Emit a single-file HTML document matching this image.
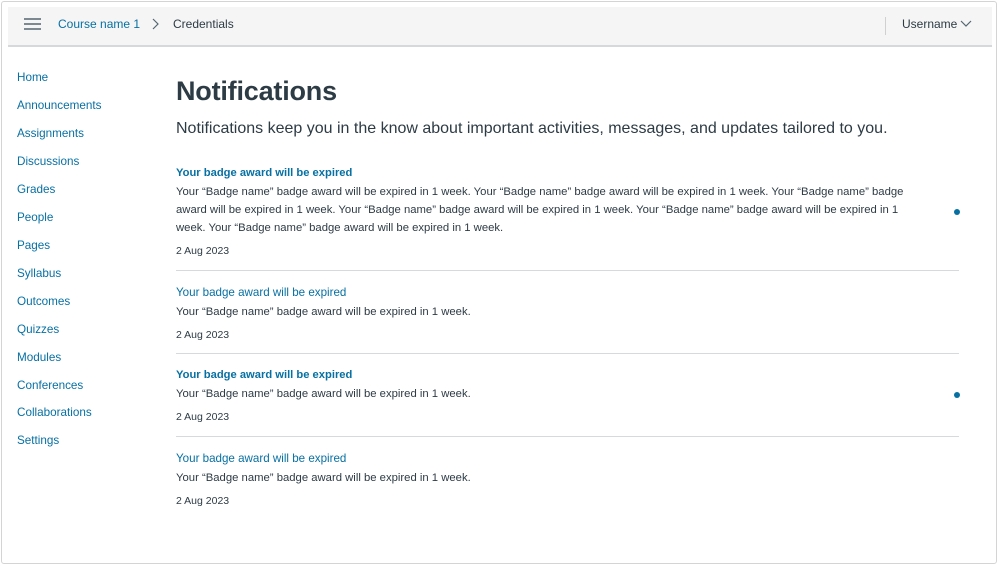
<!DOCTYPE html>
<html><head><meta charset="utf-8"><style>
*{margin:0;padding:0;box-sizing:border-box}
body{width:999px;height:566px;background:#fff;font-family:"Liberation Sans",sans-serif;position:relative;overflow:hidden;color:#2d3b45}
.frame{position:absolute;left:1px;top:1px;width:996px;height:563px;border:1px solid #d4d4d4;border-radius:3px}
.hdr{position:absolute;left:8px;top:7px;width:984px;height:40px;background:#f5f5f5;border-bottom:2px solid #d6d9db}
.hdr .t{position:absolute;top:10px;font-size:12px}
.nav a{position:absolute;left:17px;font-size:11.7px;color:#0770a3;text-decoration:none}
h1{position:absolute;left:176px;top:76px;font-size:27px;font-weight:bold;color:#2d3b45;letter-spacing:-0.2px}
.intro{position:absolute;left:176px;top:120px;font-size:16px;color:#2d3b45}
.it{position:absolute;left:176px;width:783px}
.ti{font-size:11.6px;color:#0770a3}
.b{font-weight:bold;font-size:11.2px}
.p{font-size:11.3px;line-height:18px;color:#2d3b45;margin-top:4px}
.d{font-size:10.5px;color:#2d3b45;margin-top:8px}
.hr{position:absolute;left:176px;width:783px;height:1px;background:#d7dadc}
.dot{position:absolute;left:954px;width:6px;height:6px;border-radius:50%;background:#0770a3}
</style></head><body>
<div class="frame"></div>
<div class="hdr">
<svg style="position:absolute;left:15px;top:10px" width="20" height="14"><path d="M1 2H18M1 7H18M1 12H18" stroke="#556572" stroke-width="1.6"/></svg>
<span class="t" style="left:50px;color:#0770a3">Course name 1</span>
<svg style="position:absolute;left:144px;top:11px" width="8" height="12"><path d="M1 1L6 6L1 11" stroke="#556572" stroke-width="1.2" fill="none"/></svg>
<span class="t" style="left:165px;color:#2d3b45">Credentials</span>
<div style="position:absolute;left:877px;top:10px;width:1px;height:18px;background:#d0d0d0"></div>
<span class="t" style="left:894px;color:#2d3b45">Username</span>
<svg style="position:absolute;left:952px;top:13px" width="12" height="8"><path d="M1 1L6 6L11 1" stroke="#556572" stroke-width="1.2" fill="none"/></svg>
</div>
<div class="nav">
<a style="top:71px">Home</a><a style="top:99px">Announcements</a><a style="top:127px">Assignments</a><a style="top:155px">Discussions</a><a style="top:183px">Grades</a><a style="top:211px">People</a><a style="top:239px">Pages</a><a style="top:267px">Syllabus</a><a style="top:295px">Outcomes</a><a style="top:323px">Quizzes</a><a style="top:351px">Modules</a><a style="top:379px">Conferences</a><a style="top:406px">Collaborations</a><a style="top:434px">Settings</a>
</div>
<h1>Notifications</h1>
<div class="intro">Notifications keep you in the know about important activities, messages, and updates tailored to you.</div>
<div class="it" style="top:167px"><div class="ti b">Your badge award will be expired</div>
<div class="p" style="white-space:nowrap">Your “Badge name” badge award will be expired in 1 week. Your “Badge name” badge award will be expired in 1 week. Your “Badge name” badge<br>award will be expired in 1 week. Your “Badge name” badge award will be expired in 1 week. Your “Badge name” badge award will be expired in 1<br>week. Your “Badge name” badge award will be expired in 1 week.</div>
<div class="d">2 Aug 2023</div></div>
<div class="dot" style="top:209px"></div>
<div class="hr" style="top:270px"></div>
<div class="it" style="top:286px"><div class="ti">Your badge award will be expired</div><div class="p">Your “Badge name” badge award will be expired in 1 week.</div><div class="d">2 Aug 2023</div></div>
<div class="hr" style="top:353px"></div>
<div class="it" style="top:369px"><div class="ti b">Your badge award will be expired</div><div class="p">Your “Badge name” badge award will be expired in 1 week.</div><div class="d">2 Aug 2023</div></div>
<div class="dot" style="top:392px"></div>
<div class="hr" style="top:436px"></div>
<div class="it" style="top:452px"><div class="ti">Your badge award will be expired</div><div class="p">Your “Badge name” badge award will be expired in 1 week.</div><div class="d">2 Aug 2023</div></div>
</body></html>
